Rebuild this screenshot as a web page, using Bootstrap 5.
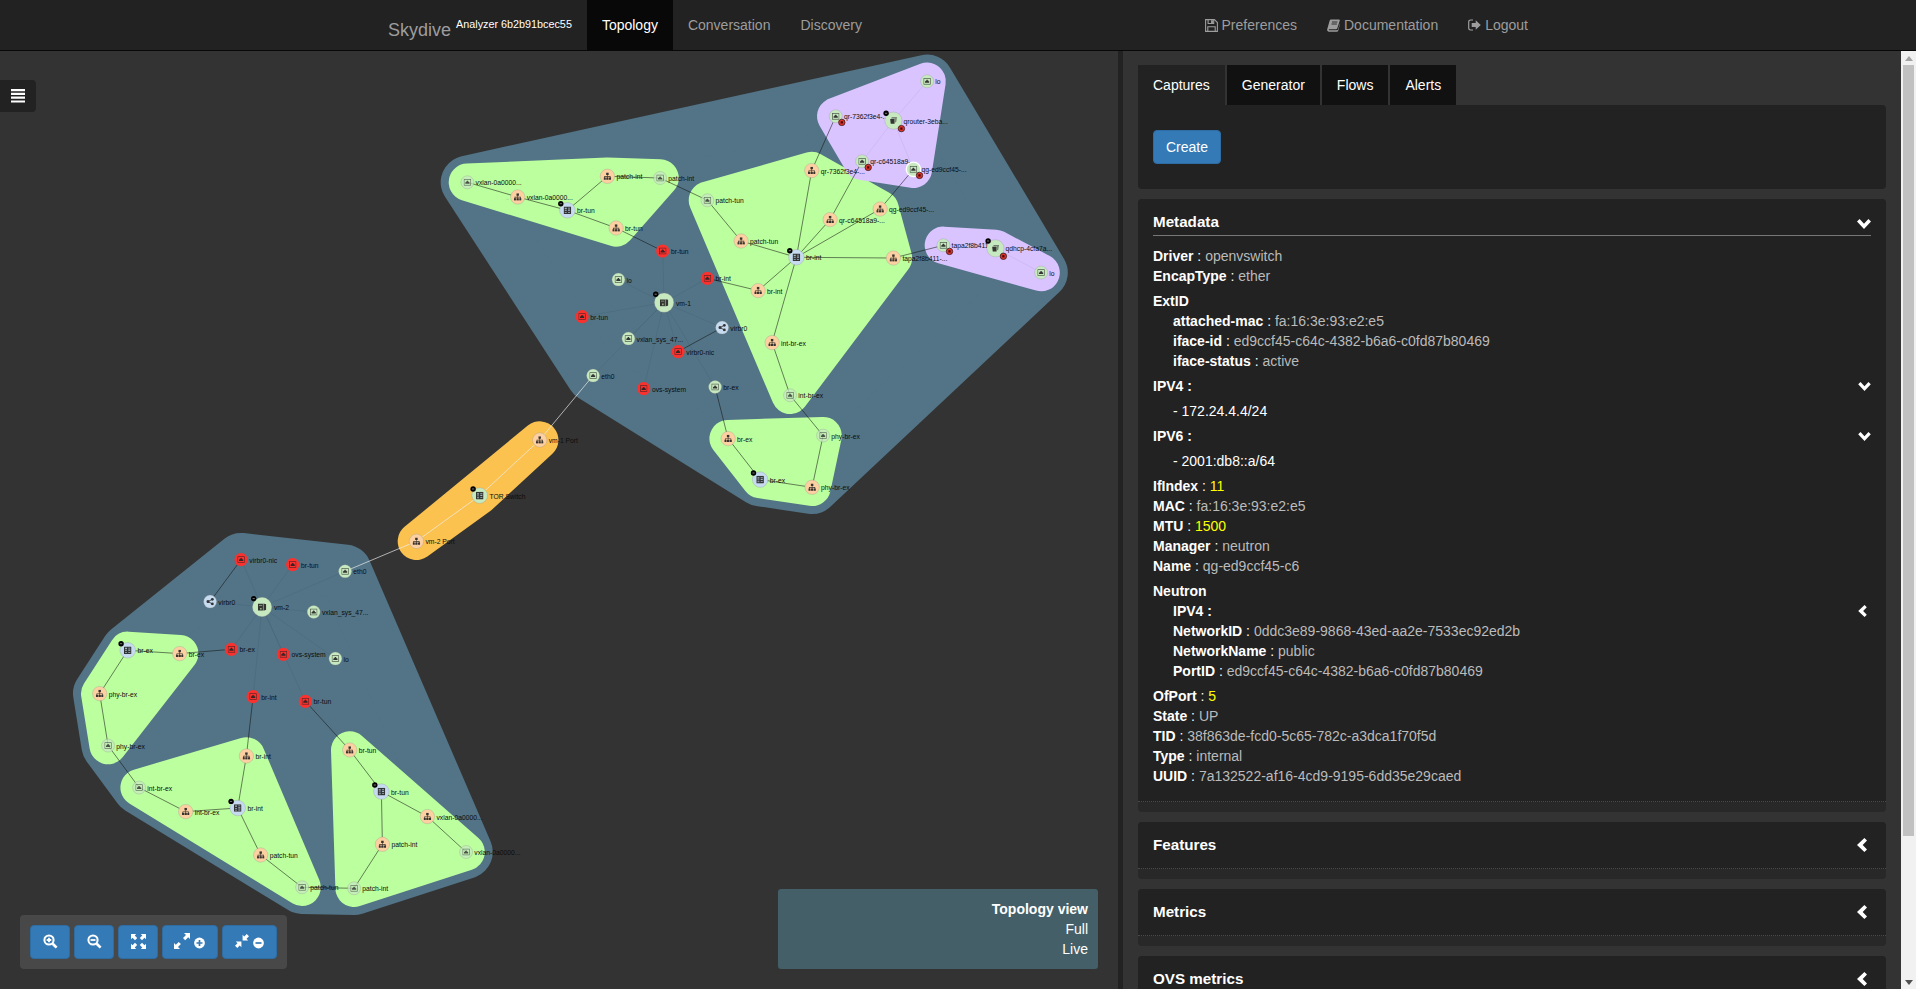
<!DOCTYPE html>
<html lang="en">
<head>
<meta charset="utf-8">
<title>Skydive Analyzer</title>
<link rel="stylesheet" href="https://cdn.jsdelivr.net/npm/bootstrap@5.3.0/dist/css/bootstrap.min.css">
<style>
  html, body { height: 100%; overflow: hidden; }
  body { font: 14px/20px "Liberation Sans", Arial, sans-serif; background: #333; color: #fff; }
  svg { display: block; }
  .topbar { height: 51px; background: #222; border-bottom: 1px solid #080808; padding: 0; }
  .topbar .inner { width: 1170px; height: 50px; margin: 0 auto; }
  .topbar .navbar-brand { font-size: 18px; line-height: 20px; color: #9d9d9d; padding: 0 15px; margin: 20px 0 0; height: 30px; }
  .topbar sup { font-size: 10.8px; color: #fff; top: -8px; }
  .topbar .nav-link { color: #9d9d9d; padding: 15px; line-height: 20px; }
  .topbar .nav-link.active { background: #080808; color: #fff; }
  .topbar .nav-link svg { margin-right: 4px; }
  .stage { width: 1118px; }
  .graph { width: 1118px; height: 938px; }
  .graph text { font-size: 6.75px; fill: #0c0c0c; }
  .drawer { left: 0; top: 29px; width: 36px; height: 32px; background: #222; border-radius: 0 4px 4px 0; padding: 9px 11px; }
  .tools { left: 20px; bottom: 20px; padding: 10px; gap: 4px; background: #484848; border-radius: 4px; }
  .btn-primary { --bs-btn-bg: #337ab7; --bs-btn-border-color: #2e6da4; --bs-btn-font-size: 14px; --bs-btn-line-height: 20px; --bs-btn-padding-x: 12px; --bs-btn-padding-y: 6px; --bs-btn-border-radius: 4px; height: 34px; }
  .tools .btn { display: flex; align-items: center; justify-content: center; width: 40px; padding: 0 0 2px; }
  .tools .btn.wide { width: 55.7px; gap: 4px; }
  .viewinfo { right: 20px; bottom: 20px; width: 320px; height: 80px; padding: 10px; background: #445f67; border-radius: 3px; }
  .splitter { width: 5px; background: #222; }
  .side { padding: 14px 15px 0; }
  .side .nav-tabs { border: 0; gap: 2px; }
  .side .nav-tabs .nav-link { background: #111; color: #fff; border: 0; border-radius: 0; margin: 0; padding: 10px 15px; line-height: 20px; }
  .side .nav-tabs .nav-link.active { background: #222; }
  .pane { background: #222; border-radius: 0 4px 4px 4px; height: 84px; padding: 25px 15px; margin-bottom: 10px; }
  .box { background: #282828; border-radius: 4px; margin-bottom: 10px; padding-bottom: 10px; }
  .box-main { background: #222; border-bottom: 1px dotted #4a4a4a; border-radius: 4px 4px 0 0; padding: 13px 15px; }
  .box-main.open { padding-bottom: 15px; }
  .box h2 { font-size: 15.2px; line-height: 20px; font-weight: bold; margin: 0; }
  .ruled { border-bottom: 1px solid #777; padding-bottom: 3px; margin-bottom: 10px; }
  .props { margin-bottom: 5px; }
  .props:last-child { margin-bottom: 0; }
  .nest { padding-left: 20px; }
  .v { color: #bbb; }
  .n { color: #ff0; }
  .lt { margin-right: 4px; }
  .vscroll { width: 15px; background: #f1f1f1; padding: 0 2px; }
  .vscroll .arrow { height: 14px; display: flex; align-items: center; justify-content: center; }
  .vscroll .thumb { height: 771px; background: #c1c1c1; }
</style>
</head>
<body class="d-flex flex-column">

<svg width="0" height="0" class="position-absolute">
  <symbol id="down" viewBox="0 0 14 10"><path d="M2.6 0 7 4.7 11.4 0 14 2.6 7 10 0 2.6z" fill="#fff"/></symbol>
  <symbol id="left" viewBox="0 0 10 14"><path d="M7.4 0 10 2.6 5.7 7 10 11.4 7.4 14 0 7z" fill="#fff"/></symbol>
  <symbol id="i-port" viewBox="-4 -4 8 8"><rect x="-3.5" y="-3.1" width="7" height="6.2" fill="none" stroke="#222" stroke-opacity=".8" stroke-width=".75"/><path d="M-2.2 1.6V0h.8v-.8h.8v-.8H.6v.8h.8V0h.8v1.600z" fill="#222"/></symbol>
  <symbol id="i-tree" viewBox="-4 -4 8 8"><path d="M-1.3-4h2.6v2.6H.3V-.2h3v1.5H4V3.6H1.700V1.3h.9V.4H.3v.9h.9v2.3h-2.4V1.3h.9V.4h-2.300v.9h.9v2.3H-4V1.3h.7V-.2h3v-1.200h-1z" fill="#222"/></symbol>
  <symbol id="i-sw" viewBox="-4 -4 8 8"><rect x="-4" y="-4" width="8" height="8" rx=".5" fill="#222"/><path d="M-2.8-2.6h2.1v1.4h-2.1zM.6-2.6h2.2v.8H.6zM.6-.8h2.2v1.200H.6zM-2.8 0h2.1v.8h-2.1zM-2.8 1.8h2.1v.9h-2.1zM.6 1.7h2.2v.9H.6z" fill="#9fb0bd"/></symbol>
  <symbol id="i-host" viewBox="-4 -4 8 8"><path d="M-4-3h4.8v6.4H-4z" fill="#222"/><path d="M1.3-3.3 4-2.6v5.3L1.3 3.6z" fill="#222"/><path d="M-3-1.7H0v.7h-3zM-2 .9h1.6v1.6H-2z" fill="#8fa58a"/></symbol>
  <symbol id="i-ns" viewBox="-4 -4 8 8"><path d="M-1.6-3.4H3.6L2.9 1.5 2 2V-2.2h-4.3z" fill="#444"/><path d="M-3.4-1.6H1.2V3.4h-4z" fill="#222"/><path d="M-1.8-2.8H2.8V1" fill="none" stroke="#b0d0a8" stroke-width=".4"/></symbol>
  <symbol id="i-share" viewBox="-4 -4 8 8"><path d="M2.5-2.5-2.2 0 2.5 2.5" fill="none" stroke="#222" stroke-width=".9"/><circle cx="-2.3" r="1.6" fill="#222"/><circle cx="2.4" cy="-2.4" r="1.5" fill="#222"/><circle cx="2.4" cy="2.4" r="1.5" fill="#222"/></symbol>
</svg>

<nav class="navbar topbar flex-shrink-0">
  <div class="inner d-flex">
    <a class="navbar-brand" href="#">Skydive <sup>Analyzer 6b2b91bcec55</sup></a>
    <div class="nav flex-nowrap">
      <a class="nav-link active" href="#">Topology</a>
      <a class="nav-link" href="#">Conversation</a>
      <a class="nav-link" href="#">Discovery</a>
    </div>
    <div class="nav flex-nowrap ms-auto">
      <a class="nav-link d-flex align-items-center" href="#"><svg width="13" height="13" viewBox="0 0 13 13" fill="none" stroke="#9d9d9d" stroke-width="1.1"><path d="M.6.6h8.8l3 3v8.8H.6z"/><path d="M3.1.8v3.7h5.6V.8M2.8 12.4V7.7h7.4v4.7M6.6 1.2v2.4h.8V1.2"/></svg>Preferences</a>
      <a class="nav-link d-flex align-items-center" href="#"><svg width="13" height="13" viewBox="0 0 13 13"><path d="M4 .5h8c.7 0 1 .4.8 1L10.300 9.300c-.2.600-.6.900-1.200.900H2.200c-.6 0-.9.900.1 1H10c.6 0 .9-.3 1.100-.9L13 4.200v1L11.200 11.700c-.2.600-.7 1-1.300 1H2C.500 12.700-.1 11.300.2 10.200L2.700 1.600C2.900.900 3.300.5 4 .5z" fill="#9d9d9d"/><path d="M5 3h5.400M4.500 5h5.400" stroke="#222" stroke-width=".9"/></svg>Documentation</a>
      <a class="nav-link d-flex align-items-center" href="#"><svg width="13" height="12" viewBox="0 0 13 12"><path d="M5 1H2.600C1.500 1 .7 1.800.7 2.900v6.200C.7 10.200 1.500 11 2.600 11H5" fill="none" stroke="#9d9d9d" stroke-width="1.200"/><path d="M3.700 4h4V1.200L12.800 6 7.700 10.800V8h-4z" fill="#9d9d9d"/></svg>Logout</a>
    </div>
  </div>
</nav>

<main class="d-flex flex-grow-1 overflow-hidden">
  <section class="stage position-relative flex-shrink-0">
    <svg class="graph" id="graph" viewBox="-0.4 50.7 1118 938"></svg>
    <div class="drawer position-absolute"><svg width="14" height="14" fill="#fff"><path d="M0 0h14v2.200H0zM0 3.800h14V6H0zM0 7.600h14v2.200H0zM0 11.400h14v2.200H0z"/></svg></div>
    <div class="tools position-absolute d-flex">
      <button class="btn btn-primary"><svg width="15" height="15" viewBox="0 0 15 15"><circle cx="6" cy="6" r="4.600" fill="none" stroke="#fff" stroke-width="2"/><path d="m9.700 9.700 3.900 3.900" stroke="#fff" stroke-width="2.700"/><path d="M6 3.700v4.600M3.700 6h4.600" stroke="#fff" stroke-width="1.800"/></svg></button>
      <button class="btn btn-primary"><svg width="15" height="15" viewBox="0 0 15 15"><circle cx="6" cy="6" r="4.600" fill="none" stroke="#fff" stroke-width="2"/><path d="m9.700 9.700 3.900 3.900" stroke="#fff" stroke-width="2.700"/><path d="M3.500 6h5" stroke="#fff" stroke-width="1.800"/></svg></button>
      <button class="btn btn-primary"><svg width="15" height="15" viewBox="0 0 15 15"><g fill="#fff"><path id="fa" d="M0 0h5.200L3.700 1.500 6.200 4 4 6.200 1.500 3.700 0 5.200z"/><use href="#fa" transform="matrix(-1 0 0 1 15 0)"/><use href="#fa" transform="matrix(1 0 0 -1 0 15)"/><use href="#fa" transform="matrix(-1 0 0 -1 15 15)"/></g></svg></button>
      <button class="btn btn-primary wide"><svg width="16" height="16" viewBox="0 0 16 16" fill="#fff"><path d="M16 0v6l-1.800-1.800-3 3L9 5l3-3L10 0zM0 16v-6l1.800 1.800 2.900-2.900 2.200 2.200-2.900 2.900L6 16z"/></svg><svg width="11" height="12" viewBox="0 0 11 12" class="mt-1"><circle cx="5.500" cy="6" r="5.400" fill="#fff"/><path d="M5.500 3v6M2.500 6h6" stroke="#337ab7" stroke-width="1.700"/></svg></button>
      <button class="btn btn-primary wide"><svg width="14" height="14" viewBox="0 0 14 14" fill="#fff"><path d="M7.600 6.400V.8l1.700 1.700L11.700 0 14 2.300l-2.500 2.400 1.700 1.700zM6.400 7.600v5.600l-1.700-1.700L2.300 14 0 11.700l2.500-2.400L.8 7.600z"/></svg><svg width="11" height="12" viewBox="0 0 11 12" class="mt-1"><circle cx="5.500" cy="6" r="5.400" fill="#fff"/><path d="M2.500 6h6" stroke="#337ab7" stroke-width="1.700"/></svg></button>
    </div>
    <div class="viewinfo position-absolute text-end"><b>Topology view</b><br>Full<br>Live</div>
  </section>

  <div class="splitter flex-shrink-0"></div>

  <aside class="side flex-grow-1 overflow-hidden">
    <div class="nav nav-tabs">
      <a class="nav-link active" href="#">Captures</a><a class="nav-link" href="#">Generator</a><a class="nav-link" href="#">Flows</a><a class="nav-link" href="#">Alerts</a>
    </div>
    <div class="pane"><button class="btn btn-primary">Create</button></div>

    <div class="box">
      <div class="box-main open">
        <div class="d-flex justify-content-between align-items-center ruled"><h2>Metadata</h2><svg width="14" height="10" class="mt-1"><use href="#down"/></svg></div>
        <div class="props">
          <div><b>Driver</b> : <span class="v">openvswitch</span></div>
          <div><b>EncapType</b> : <span class="v">ether</span></div>
        </div>
        <div class="props">
          <div><b>ExtID</b></div>
          <div class="nest">
            <div><b>attached-mac</b> : <span class="v">fa:16:3e:93:e2:e5</span></div>
            <div><b>iface-id</b> : <span class="v">ed9ccf45-c64c-4382-b6a6-c0fd87b80469</span></div>
            <div><b>iface-status</b> : <span class="v">active</span></div>
          </div>
        </div>
        <div class="props d-flex justify-content-between align-items-center"><b>IPV4 :</b><svg width="13" height="9"><use href="#down"/></svg></div>
        <div class="props nest">- 172.24.4.4/24</div>
        <div class="props d-flex justify-content-between align-items-center"><b>IPV6 :</b><svg width="13" height="9"><use href="#down"/></svg></div>
        <div class="props nest">- 2001:db8::a/64</div>
        <div class="props">
          <div><b>IfIndex</b> : <span class="n">11</span></div>
          <div><b>MAC</b> : <span class="v">fa:16:3e:93:e2:e5</span></div>
          <div><b>MTU</b> : <span class="n">1500</span></div>
          <div><b>Manager</b> : <span class="v">neutron</span></div>
          <div><b>Name</b> : <span class="v">qg-ed9ccf45-c6</span></div>
        </div>
        <div class="props">
          <div><b>Neutron</b></div>
          <div class="nest">
            <div class="d-flex justify-content-between align-items-center"><b>IPV4 :</b><svg class="lt" width="9" height="12"><use href="#left"/></svg></div>
            <div><b>NetworkID</b> : <span class="v">0ddc3e89-9868-43ed-aa2e-7533ec92ed2b</span></div>
            <div><b>NetworkName</b> : <span class="v">public</span></div>
            <div><b>PortID</b> : <span class="v">ed9ccf45-c64c-4382-b6a6-c0fd87b80469</span></div>
          </div>
        </div>
        <div class="props">
          <div><b>OfPort</b> : <span class="n">5</span></div>
          <div><b>State</b> : <span class="v">UP</span></div>
          <div><b>TID</b> : <span class="v">38f863de-fcd0-5c65-782c-a3dca1f70f5d</span></div>
          <div><b>Type</b> : <span class="v">internal</span></div>
          <div><b>UUID</b> : <span class="v">7a132522-af16-4cd9-9195-6dd35e29caed</span></div>
        </div>
      </div>
    </div>
    <div class="box"><div class="box-main d-flex justify-content-between align-items-center"><h2>Features</h2><svg class="lt" width="10" height="14"><use href="#left"/></svg></div></div>
    <div class="box"><div class="box-main d-flex justify-content-between align-items-center"><h2>Metrics</h2><svg class="lt" width="10" height="14"><use href="#left"/></svg></div></div>
    <div class="box"><div class="box-main d-flex justify-content-between align-items-center"><h2>OVS metrics</h2><svg class="lt" width="10" height="14"><use href="#left"/></svg></div></div>
  </aside>

  <div class="vscroll d-flex flex-column flex-shrink-0">
    <div class="arrow"><svg width="8" height="5"><path d="M0 5 4 0l4 5z" fill="#a3a3a3"/></svg></div>
    <div class="thumb"></div>
    <div class="arrow mt-auto"><svg width="8" height="5"><path d="M0 0h8L4 5z" fill="#505050"/></svg></div>
  </div>
</main>

<script src="https://cdn.jsdelivr.net/npm/bootstrap@5.3.0/dist/js/bootstrap.bundle.min.js"></script>
<script>
// kind: radius, fill, icon, label offset
const K = {
  f: [6.5, '#c7e9c0', 'port', 8.2],            // interface
  g: [6.5, '#c7e9c0', 'port', 8.2],            // patch or tunnel interface, dimmed
  d: [6.6, '#f9322f', 'port', 8.2],            // interface down
  o: [7.2, '#fdd0a2', 'tree', 9],              // ovs port
  b: [7.8, '#c6dbef', 'sw', 9.7],              // bridge
  t: [7.8, '#c7e9c0', 'sw', 9.9],              // switch
  v: [6.5, '#c6dbef', 'share', 8.2],           // linux bridge
  n: [8.6, '#c7e9c0', 'ns', 10.2],             // namespace
  h: [9.7, '#c7e9c0', 'host', 11.8]            // host
};
// id: [x, y, kind, label, has a capture]
const N = {
  a1:[467,182,'g','vxlan-0a0000...'], a2:[517.3,196.7,'o','vxlan-0a0000...'], a3:[567,210,'b','br-tun'],
  a4:[607,176,'o','patch-int'], a5:[659.7,177.7,'g','patch-int'], a6:[707,200,'g','patch-tun'],
  a7:[740.7,240.7,'o','patch-tun'], a8:[615.7,227.7,'o','br-tun'], a9:[662.3,250.7,'d','br-tun'],
  q1:[926.7,81,'f','lo'], q2:[835.3,116,'f','qr-7362f3e4-...',1], q3:[893,120.3,'n','qrouter-3eba...',1],
  q4:[861.7,161,'f','qr-c64518a9-...',1], q5:[913,169,'f','qg-ed9ccf45-...',1],
  c1:[811.3,170.3,'o','qr-7362f3e4-...'], c2:[829.7,219.3,'o','qr-c64518a9-...'], c3:[879.7,208.7,'o','qg-ed9ccf45-...'],
  c4:[796,257,'b','br-int'], c5:[893,257.7,'o','tapa2f8b411-...'], c6:[757.7,290.3,'o','br-int'],
  c7:[771.7,342.3,'o','int-br-ex'], c8:[789.7,395,'g','int-br-ex'],
  p1:[943,245,'f','tapa2f8b411-...',1], p2:[995,248,'n','qdhcp-4cfa7a...',1], p3:[1040.7,272.3,'f','lo'],
  h1:[663.7,302.3,'h','vm-1'], e1:[618,279.3,'f','lo'], e2:[707,278,'d','br-int'], e3:[581.7,316.3,'d','br-tun'],
  e4:[721.7,327.3,'v','virbr0'], e5:[628,338.3,'f','vxlan_sys_47...'], e6:[677.7,351.3,'d','virbr0-nic'],
  e7:[592.7,375.3,'f','eth0'], e8:[643.3,388.3,'d','ovs-system'], e9:[714.7,386.7,'f','br-ex'],
  x1:[727.7,438.3,'o','br-ex'], x2:[822.7,435.3,'g','phy-br-ex'], x3:[759.7,479.3,'b','br-ex'], x4:[811.7,487,'o','phy-br-ex'],
  t1:[539.3,439.7,'o','vm-1 Port'], t2:[479.3,495.3,'t','TOR Switch'], t3:[416,541,'o','vm-2 Port'],
  h2:[261.7,606.7,'h','vm-2'], f1:[240.7,559.3,'d','virbr0-nic'], f2:[292.3,564.3,'d','br-tun'], f3:[344.7,571,'f','eth0'],
  f4:[209.7,601.3,'v','virbr0'], f5:[313.3,611.7,'f','vxlan_sys_47...'], f6:[231,649,'d','br-ex'],
  f7:[283,654,'d','ovs-system'], f8:[335,658.3,'f','lo'], f9:[252.7,696.3,'d','br-int'], f0:[305,701,'d','br-tun'],
  g1:[127.3,650,'b','br-ex'], g2:[179.3,653.3,'o','br-ex'], g3:[99.3,693.3,'o','phy-br-ex'], g4:[107.7,745.3,'g','phy-br-ex'],
  i1:[138.7,787.3,'g','int-br-ex'], i2:[185.3,811.3,'o','int-br-ex'], i3:[237.3,807.7,'b','br-int'], i4:[246,755.7,'o','br-int'],
  i5:[260.3,854.7,'o','patch-tun'], i6:[301.7,887,'g','patch-tun'],
  j1:[349.3,749.7,'o','br-tun'], j2:[381,791.3,'b','br-tun'], j3:[427,816.3,'o','vxlan-0a0000...'], j4:[382,844,'o','patch-int'],
  j5:[353.7,888,'g','patch-int'], j6:[465.7,851.7,'g','vxlan-0a0000...']
};
// [outline nodes, colour, margin]
const hulls = [
  ['a1 q1 p3 x4 x3 e7', '#527486', 26.7],
  ['f1 f3 j6 j5 i6 i1 g4 g3 g1', '#527486', 26.7],
  ['a1 a4 a5 a8', '#bcff9e', 18.7],
  ['a6 c1 c3 c5 c8', '#bcff9e', 18.7],
  ['x1 x2 x4 x3', '#bcff9e', 18.7],
  ['g1 g2 g4 g3', '#bcff9e', 18.7],
  ['i1 i4 i6', '#bcff9e', 18.7],
  ['j1 j6 j5', '#bcff9e', 18.7],
  ['q1 q5 q4 q2', '#d9c4ff', 18.7],
  ['p1 p2 p3', '#d9c4ff', 18.7],
  ['t1 t2 t3', '#fcc24f', 18.7]
];
const owned = { h1:'a9 e1 e2 e3 e4 e5 e6 e7 e8 e9', h2:'f1 f2 f3 f4 f5 f6 f7 f8 f9 f0', q3:'q1 q4 q5', p2:'p3' };
const chains = ['a1 a2 a3 a4 a5 a6 a7 c4','a3 a8 a9','e2 c6 c4','c4 c1 q2','c4 c2 q4','c4 c3 q5','c4 c5 p1',
  'c4 c7 c8 x2 x4 x3 x1 e9','e4 e6','f4 f1','f6 g2 g1 g3 g4 i1 i2 i3 i4 f9','i3 i5 i6 j5 j4 j2 j1 f0','j2 j3 j6'];
const pts = s => s.split(' ').map(k => N[k][0] + ',' + N[k][1]).join(' ');
let s = '';
for (const [p, c, r] of hulls)
  s += `<polygon points="${pts(p)}" fill="${c}" stroke="${c}" stroke-width="${2 * r}" stroke-linejoin="round"/>`;
for (const o in owned)
  for (const k of owned[o].split(' '))
    s += `<polyline points="${pts(o + ' ' + k)}" stroke="${o[0] === 'h' ? '#3c5868' : '#b9a8dc'}" stroke-opacity="${o[0] === 'h' ? .3 : .5}" stroke-width=".7"/>`;
for (const c of chains) s += `<polyline points="${pts(c)}" fill="none" stroke="#111" stroke-opacity=".68" stroke-width=".8"/>`;
for (const c of ['e7 t1 t2 t3 f3'])
  s += `<polyline points="${pts(c)}" fill="none" stroke="#eee" stroke-opacity=".75" stroke-width=".9"/>`;
for (const id in N) {
  const [x, y, k, label, cap] = N[id], [r, fill, icon, dx] = K[k];
  const ring = id === 'q5' ? 'stroke="#fff" stroke-width="1.3"' : k === 'd' ? '' : 'stroke="#8a8a8a" stroke-opacity=".55" stroke-width=".5"';
  const w = k === 'h' ? 8.4 : 7.6;
  s += `<g transform="translate(${x} ${y})"><circle r="${id === 'q5' ? 7.2 : r}" fill="${fill}" ${k === 'g' ? 'fill-opacity=".75"' : ''} ${ring}/>`
    + `<use href="#i-${icon}" x="${-w / 2}" y="${-w / 2}" width="${w}" height="${w}" opacity="${k === 'g' ? .75 : .9}"/>`
    + `<text x="${dx}" y="2.9">${label}</text>`;
  if ('bthn'.includes(k)) {
    const d = k === 'h' ? 8.4 : k === 'n' ? 7.3 : 6.6;
    s += `<circle cx="${-d}" cy="${-d}" r="2.7" fill="#000"/><path d="M${-d - 1.1} ${-d}h2.200" stroke="#aaa" stroke-width=".7"/>`;
  }
  if (cap) {
    const d = k === 'n' ? 8 : 6.1;
    s += `<circle cx="${d}" cy="${d}" r="3.200" fill="#e0332c" stroke="#3a1a1a" stroke-width=".8"/><rect x="${d - 1.1}" y="${d - 1.1}" width="2.200" height="2.200" fill="#400"/>`;
  }
  s += '</g>';
}
document.getElementById('graph').innerHTML = s;
</script>
</body>
</html>
